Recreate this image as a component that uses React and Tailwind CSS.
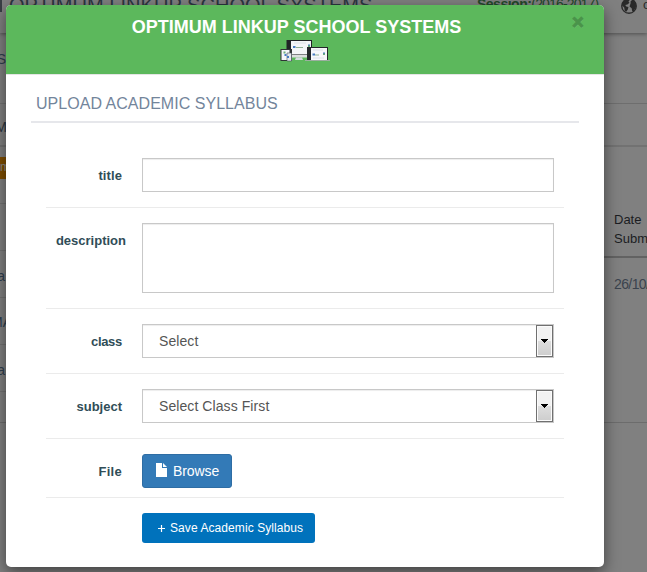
import React from "react";

function Backdrop() {
  return (
    <div className="flex h-[572px] w-[647px] flex-col overflow-hidden bg-[#808080] whitespace-nowrap">
      <header className="z-10 flex h-[33px] shrink-0 bg-[#808080] shadow-[0_1px_4px_rgba(0,0,0,0.4)]">
        <div className="h-[12px] w-[2px] shrink-0 bg-[#3a3f45]" />
        <div className="-mt-[7px] ml-[7px] w-[468px] shrink-0 text-[20px] leading-[24px] tracking-[0.04px] text-[#2c3640]">
          OPTIMUM LINKUP SCHOOL SYSTEMS
        </div>
        <div className="-mt-[5px] w-[144px] shrink-0 text-[14px] leading-[18px] tracking-[-0.85px] text-[#23492a]">
          <b className="tracking-[-0.5px]">Session:</b>(2016-2017)
        </div>
        <svg className="-mt-[2px] h-[16px] w-[16px] shrink-0" viewBox="0 0 15 15">
          <circle cx="7.5" cy="7.5" r="6.8" fill="#808080" stroke="#292929" strokeWidth="1.3" />
          <path d="M1 5 4 1.5l3-.5 1 1-1 1.5 1 1-2 1.5-2 .5 1 1.500 2 .5-.5 2L5 13l-1.500-1-.5-3L1 7zM9 3l2-1.500 3 4v3l-2 4-1.500 0-.5-3-2-1.500 1-3z" fill="#292929" />
        </svg>
        <div className="-mt-[4px] ml-[6px] shrink-0 text-[13px] leading-[18px] text-[#292929]">ou</div>
      </header>
      <div className="flex flex-1 justify-between text-[14px] text-[#2f3e4e]">
        <div className="flex w-[6px] flex-col overflow-hidden">
          <div className="flex h-[71px] shrink-0 justify-end border-b border-[#727272] pt-[16px] leading-[20px]"><span>S</span></div>
          <div className="flex h-[43px] shrink-0 justify-end border-b-2 border-[#727272] pt-[13px] leading-[20px] text-[#2c3640]"><span className="-mr-[1px]">M</span></div>
          <div className="h-[57px] shrink-0 border-b border-[#727272] pt-[10px]">
            <div className="flex h-[22px] justify-end bg-[#7f4e00] text-[12px] leading-[21px] text-[#8b8b8b]"><span className="-mr-[4px]">m</span></div>
          </div>
          <div className="h-[47px] shrink-0 border-b border-[#727272]" />
          <div className="flex h-[47px] shrink-0 justify-end border-b border-[#727272] pt-[15px] leading-[20px]"><span className="mr-[1px]">a</span></div>
          <div className="flex h-[47px] shrink-0 justify-end border-b border-[#727272] pt-[14px] text-[14px] leading-[20px]"><span className="-mr-[6px]">MA</span></div>
          <div className="flex h-[47px] shrink-0 justify-end border-b border-[#727272] pt-[15px] leading-[20px]"><span className="mr-[1px]">a</span></div>
          <div className="h-[31px] shrink-0 border-b border-[#6c6c6c]" />
        </div>
        <div className="flex w-[43px] flex-col overflow-hidden">
          <div className="h-[71px] shrink-0 border-b border-[#6e6e6e]" />
          <div className="h-[43px] shrink-0 border-b-2 border-[#727272]" />
          <div className="h-[111px] shrink-0 border-b-2 border-[#626262] pt-[63px] pl-[10px] text-[13px] leading-[19px] text-[#1b1d22]">Date<br />Submitted</div>
          <div className="h-[165px] shrink-0 border-b border-[#6c6c6c] pt-[16px] pl-[10px] leading-[20px] tracking-[-0.6px] text-[#3b434e]">26/10/2016</div>
        </div>
      </div>
    </div>
  );
}

function DeviceLogo() {
  return (
    <svg className="h-[24px] w-[50px]" viewBox="0 0 50 24" fill="none">
      <path d="M6.500 1h25.500v16H6.500z" fill="#202326" />
      <path d="M11 2h20v13H11z" fill="#f4f5f8" />
      <path d="M9 15.500h23v3H9z" fill="#dcdedf" />
      <path d="M16 18.500h6l1 2.500h-8z" fill="#d5dce0" />
      <path d="M.5 10h11.500v12H.5z" fill="#303336" />
      <path d="M1.500 11h8v10h-8z" fill="#f5f7fa" />
      <path d="M7 14h4.500v8H7z" fill="#e5eaef" stroke="#47505a" strokeWidth=".6" />
      <path d="M27 8h21v14H27z" fill="#24282b" />
      <path d="M31 9h16v12H31z" fill="#f7f7fa" />
      <path d="M25 21.500h25" stroke="#9caea0" />
      <path d="M13 8h2.500m17 7.500H35M4.500 16h2m.5 2h2" stroke="#477bc1" strokeWidth="2" />
      <path d="M16 8.500h7m12 7.500h4" stroke="#8fae93" />
      <path d="M28 7h2m13 8h2M3.500 13.500h2" stroke="#6bac79" strokeWidth="2" />
      <path d="M28 6h2m13 8h2" stroke="#477bc1" />
      <path d="M14 4h12M33 11h10M33 19h11" stroke="#dce0e7" />
    </svg>
  );
}

function Field({ label, rowClass, labelClass, children }) {
  return (
    <div className={"flex shrink-0 border-b border-[#ebebeb] pt-[15px] " + rowClass}>
      <div className={"shrink-0 pt-[8px] text-right text-[13px] leading-[20px] font-bold text-[#304d57] " + labelClass}>{label}</div>
      <div className="ml-auto w-[422px]">{children}</div>
    </div>
  );
}

const control = "w-[412px] border border-[#c8c8c8] bg-white shadow-[inset_0_1px_1px_rgba(0,0,0,0.075)]";

function SelectBox({ children }) {
  return (
    <div className={"flex h-[34px] justify-between pl-[16px] text-[14px] leading-[32px] text-[#555] " + control}>
      <span className="tracking-[0.08px]">{children}</span>
      <div className="flex h-[32px] w-[17px] items-center justify-center border border-[#707070] bg-linear-to-b from-[#f2f2f2] from-50% via-[#dedede] via-50% to-[#cdcdcd] shadow-[inset_0_0_0_1px_#fbfbfb]">
        <svg className="h-[4px] w-[7px]" viewBox="0 0 7 4" shapeRendering="crispEdges"><path d="M0 0h7v1H6v1H5v1H4v1H3V3H2V2H1V1H0z" fill="#000" /></svg>
      </div>
    </div>
  );
}

function Modal() {
  return (
    <div className="absolute top-[5px] left-[6px] flex h-[562px] w-[598px] flex-col overflow-hidden rounded-[5px] bg-white whitespace-nowrap shadow-[0_5px_15px_rgba(0,0,0,0.5)]">
      <div className="flex h-[70px] shrink-0 border-b border-[#e5e5e5] bg-[#5cb85c] px-[15px]">
        <div className="flex flex-1 flex-col items-center">
          <h4 className="mt-[11px] text-[18px] leading-[22px] font-bold text-white">OPTIMUM LINKUP SCHOOL SYSTEMS</h4>
          <div className="mt-[1px] ml-[16px]"><DeviceLogo /></div>
        </div>
        <div className="mt-[7px] mr-[5px] w-[12px] text-[20px] leading-[21px] font-bold text-[#4a934a] [-webkit-text-stroke:1px_#4a934a] [text-shadow:0_1px_0_#7dc67d]">×</div>
      </div>
      <div className="mx-[25px] h-[48px] shrink-0 border-b-2 border-[#e6e7eb] pt-[17px] pl-[5px] text-[16px] leading-[24px] tracking-[0.03px] text-[#73859b]">UPLOAD ACADEMIC SYLLABUS</div>
      <form className="mx-[40px] mt-[20px] flex flex-col">
        <Field label="title" rowClass="h-[65px]" labelClass="w-[76px] tracking-[0.1px]"><div className={"h-[34px] " + control} /></Field>
        <Field label="description" rowClass="h-[101px]" labelClass="w-[80px]"><div className={"h-[70px] " + control} /></Field>
        <Field label="class" rowClass="h-[65px]" labelClass="w-[76px] tracking-[-0.3px]"><SelectBox>Select</SelectBox></Field>
        <Field label="subject" rowClass="h-[65px]" labelClass="w-[76px]"><SelectBox>Select Class First</SelectBox></Field>
        <Field label="File" rowClass="h-[59px]" labelClass="w-[76px] tracking-[0.3px]">
          <div className="flex h-[34px] w-[90px] items-center rounded-[3px] border border-[#2e6da4] bg-[#337ab7] pl-[13px] text-[14px] leading-[20px] tracking-[-0.1px] text-white">
            <svg className="mr-[6px] -mt-[2px] h-[14px] w-[11px]" viewBox="0 0 11 14" fill="#fff"><path d="M0 0h6v5h5v9H0z" /><path d="M7 0l4 4H7z" /></svg>
            Browse
          </div>
        </Field>
        <div className="ml-[96px] mt-[15px] flex h-[30px] w-[173px] items-center rounded-[3px] bg-[#0072bc] pl-[16px] text-[12px] leading-[18px] tracking-[0.08px] text-white">
          <svg className="mr-[5px] h-[7px] w-[7px]" viewBox="0 0 7 7"><path d="M3.5 0v7M0 3.5h7" stroke="#fff" strokeWidth="1.2" /></svg>
          Save Academic Syllabus
        </div>
      </form>
    </div>
  );
}

export default function App() {
  return (
    <div className="relative h-[572px] w-[647px] overflow-hidden [font-family:'Liberation_Sans',Arial,sans-serif]">
      <Backdrop />
      <div className="absolute inset-0 z-20"><Modal /></div>
    </div>
  );
}
